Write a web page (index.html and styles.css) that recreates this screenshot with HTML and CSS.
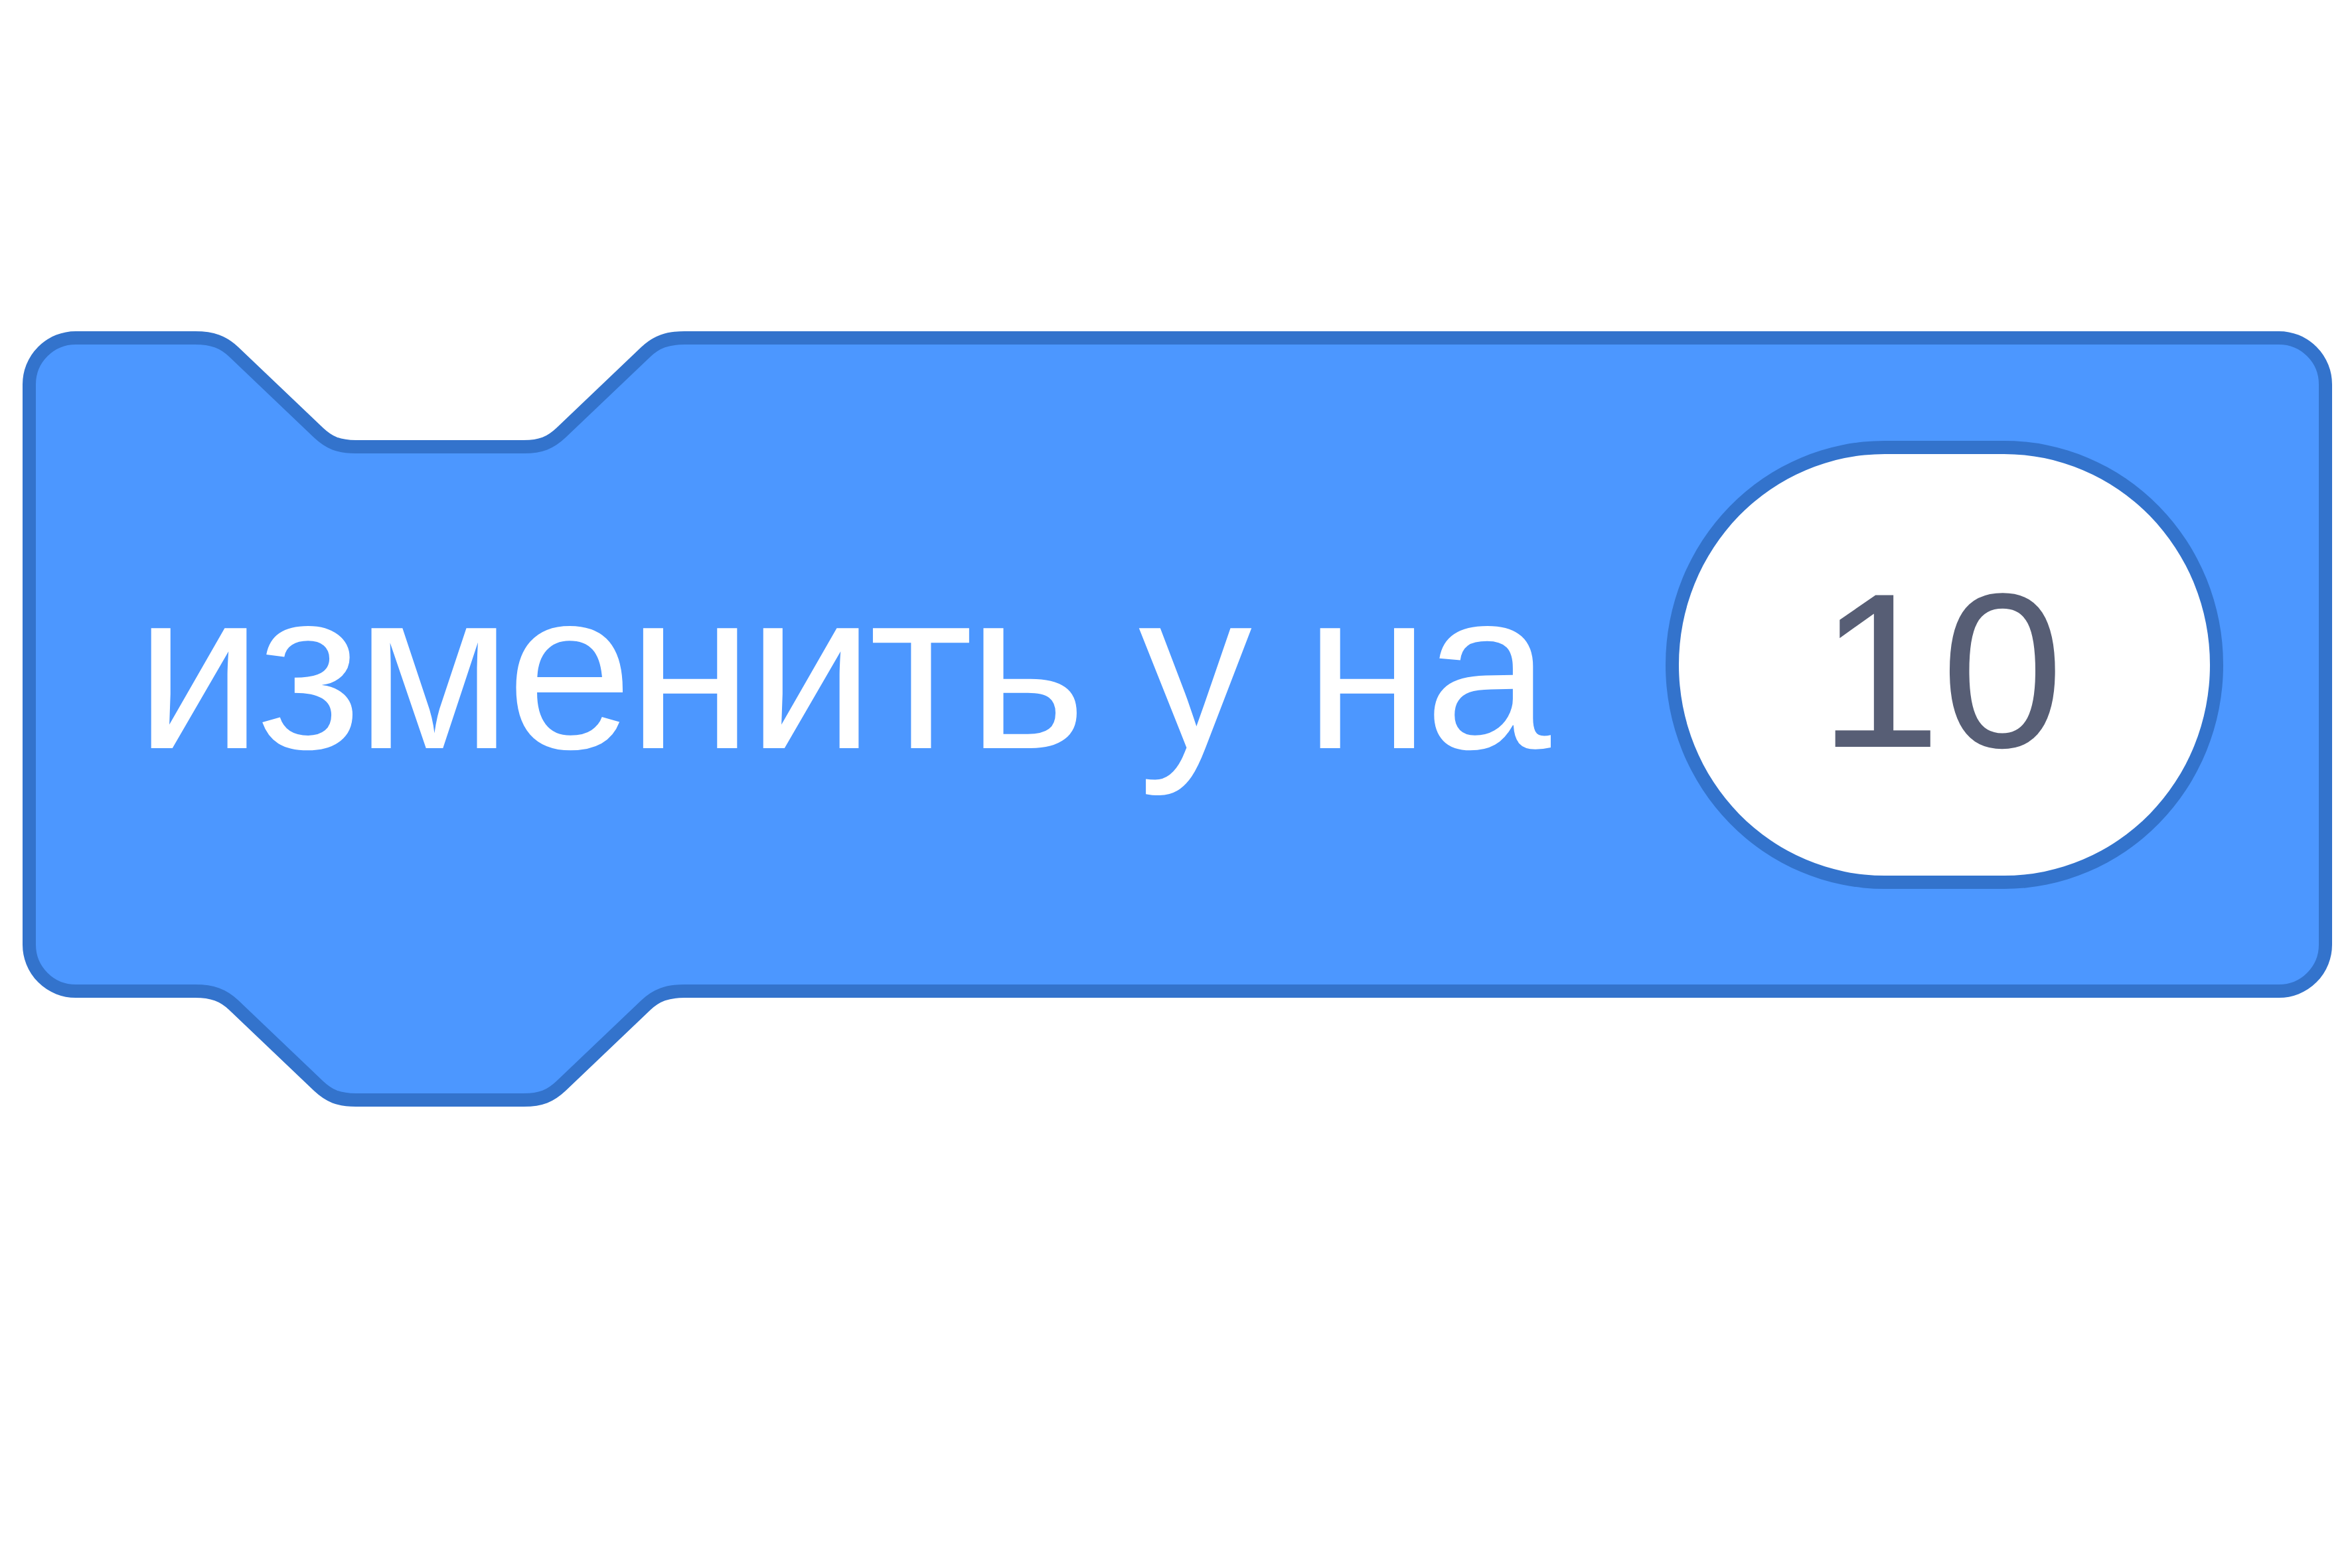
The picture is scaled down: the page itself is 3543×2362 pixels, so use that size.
FILE: index.html
```html
<!DOCTYPE html>
<html lang="ru">
<head>
<meta charset="utf-8">
<title>изменить у на 10</title>
<link rel="stylesheet" href="styles.css">
</head>
<body>
<div class="stage">
  <div class="block">
    <svg class="block-shape" width="3479" height="1169" viewBox="0 0 3479 1169" aria-hidden="true">
      <path d="M 10 80 A 70 70 0 0 1 80 10 H 260 C 286 10 302 16 318 31 L 446 153 C 462 168 476 174 502 174 H 755 C 781 174 795 168 811 153 L 939 31 C 955 16 971 10 997 10 H 3399 A 70 70 0 0 1 3469 80 V 924 A 70 70 0 0 1 3399 994 H 997 C 971 994 955 1000 939 1015 L 811 1137 C 795 1152 781 1158 755 1158 H 502 C 476 1158 462 1152 446 1137 L 318 1015 C 302 1000 286 994 260 994 H 80 A 70 70 0 0 1 10 924 Z" fill="#4c97ff" stroke="#3373cc" stroke-width="20" stroke-linejoin="round"/>
    </svg>
    <div class="block-body">
      <span class="label">изменить у на</span>
      <div class="input"><span class="value">10</span></div>
    </div>
  </div>
</div>
</body>
</html>
```

FILE: styles.css
```css
html, body {
  margin: 0;
  padding: 0;
  background: #ffffff;
}
.stage {
  padding: 499px 0 0 34px;
}
.block {
  position: relative;
  width: 3479px;
  height: 1169px;
}
.block-shape {
  position: absolute;
  left: 0;
  top: 0;
  display: block;
}
.block-body {
  position: relative;
  height: 1004px;
  display: flex;
  align-items: center;
  padding: 0 164px 0 170px;
  box-sizing: border-box;
}
.label {
  font-family: "Liberation Sans", Arial, sans-serif;
  font-size: 342px;
  letter-spacing: -8px;
  color: #ffffff;
  white-space: nowrap;
  line-height: 1;
  margin-top: 14px;
}
.input {
  margin-left: auto;
  width: 840px;
  height: 675px;
  box-sizing: border-box;
  border: 20px solid #3373cc;
  border-radius: 330px / 337px;
  background: #ffffff;
  display: flex;
  align-items: center;
  justify-content: center;
}
.value {
  font-family: "Liberation Sans", Arial, sans-serif;
  font-size: 332px;
  color: #575e75;
  line-height: 1;
  margin-top: 18px;
  margin-right: 10px;
}
```
